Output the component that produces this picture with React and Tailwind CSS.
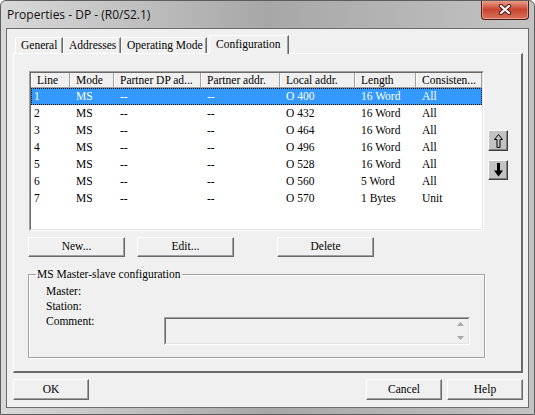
import React from 'react';

const rows = [
  ['1', 'MS', '--', '--', 'O 400', '16 Word', 'All'],
  ['2', 'MS', '--', '--', 'O 432', '16 Word', 'All'],
  ['3', 'MS', '--', '--', 'O 464', '16 Word', 'All'],
  ['4', 'MS', '--', '--', 'O 496', '16 Word', 'All'],
  ['5', 'MS', '--', '--', 'O 528', '16 Word', 'All'],
  ['6', 'MS', '--', '--', 'O 560', '5 Word', 'All'],
  ['7', 'MS', '--', '--', 'O 570', '1 Bytes', 'Unit'],
];

const columns = [
  { label: 'Line', width: 39 },
  { label: 'Mode', width: 44 },
  { label: 'Partner DP ad...', width: 87 },
  { label: 'Partner addr.', width: 79 },
  { label: 'Local addr.', width: 75 },
  { label: 'Length', width: 61 },
  { label: 'Consisten...', width: 66 },
];

// raised classic button
const Button = ({ children, className = '' }) => (
  <div
    className={`flex items-center justify-center border border-t-white border-l-white border-r-[#696969] border-b-[#696969] bg-[#f0f0f0] shadow-[inset_-1px_-1px_0_#a0a0a0] text-black ${className}`}
  >
    {children}
  </div>
);

const Tab = ({ label, width, active }) => (
  <div
    className={
      active
        ? 'relative z-10 -mb-px ml-[2px] h-[19px] whitespace-nowrap border-t border-l border-white border-r border-r-[#696969] bg-[#f0f0f0] pl-[6px] leading-[17px] shadow-[inset_-1px_0_0_#a0a0a0]'
        : 'h-[16px] whitespace-nowrap border-t border-l border-white border-r border-r-[#696969] bg-[#f0f0f0] pl-[5px] leading-[15px] shadow-[inset_-1px_0_0_#a0a0a0]'
    }
    style={{ width }}
  >
    {label}
  </div>
);

const UpArrow = () => (
  <svg width="11" height="16" viewBox="0 0 11 16">
    <polygon
      points="5.5,1.5 9.5,6.5 7,6.5 7,14.5 4,14.5 4,6.5 1.5,6.5"
      fill="none"
      stroke="#000"
      strokeWidth="1"
    />
  </svg>
);

const DownArrow = () => (
  <svg width="11" height="16" viewBox="0 0 11 16">
    <polygon points="4,1 7,1 7,8.5 10,8.5 5.5,14.5 1,8.5 4,8.5" fill="#000" />
  </svg>
);

const CloseGlyph = () => (
  <svg width="14" height="11" viewBox="0 0 14 11">
    <path d="M3 2 L11 9 M11 2 L3 9" stroke="#4a1a12" strokeWidth="4.2" strokeLinecap="round" />
    <path d="M3 2 L11 9 M11 2 L3 9" stroke="#fff" strokeWidth="2.2" strokeLinecap="round" />
  </svg>
);

export default function App() {
  return (
    <div className="relative h-[415px] w-[535px] overflow-hidden rounded-t-[6px] border border-[#5d5d5d] bg-gradient-to-r from-[#d9d9d9] via-[#a7a7a7] to-[#c3c3c3] font-['Liberation_Serif',serif] text-[11.5px] text-black">
      {/* title bar */}
      <div className="flex h-[27px] items-center pl-[6px] font-['Open_Sans',sans-serif] text-[12px] text-[#111]">
        Properties - DP - (R0/S2.1)
      </div>
      <div className="absolute top-[-1px] right-[5px] flex h-[20px] w-[48px] items-center justify-center rounded-b-[4px] border border-t-0 border-[#4b1f18] bg-gradient-to-b from-[#eba593] via-[#c9452f] to-[#d8715c] shadow-[inset_0_0_0_1px_rgba(255,200,190,0.5)]">
        <CloseGlyph />
      </div>

      {/* client area */}
      <div className="ml-[5px] h-[380px] w-[523px] border border-[#6b6b6b] bg-[#f0f0f0] pt-[6px]">
        {/* tabs */}
        <div className="flex h-[18px] items-end pl-[8px]">
          <Tab label="General" width={48} />
          <Tab label="Addresses" width={58} />
          <Tab label="Operating Mode" width={86} />
          <Tab label="Configuration" width={80} active />
        </div>

        {/* tab panel */}
        <div className="ml-[6px] h-[320px] w-[510px] border-t border-l border-white border-r-2 border-b-2 border-r-[#696969] border-b-[#696969] bg-[#f0f0f0] pt-[17px]">
          <div className="flex">
            {/* list view */}
            <div className="ml-[15px] h-[160px] w-[455px] border border-t-[#a0a0a0] border-l-[#a0a0a0] border-r-white border-b-white">
              <div className="h-full w-full border border-t-[#696969] border-l-[#696969] border-r-[#e3e3e3] border-b-[#e3e3e3] bg-white">
                <div className="flex h-[15px] border-b border-[#a0a0a0]">
                  {columns.map((c) => (
                    <div
                      key={c.label}
                      className="truncate border-l border-white border-r border-r-[#a0a0a0] bg-[#f0f0f0] pl-[5px] leading-[14px] whitespace-nowrap"
                      style={{ width: c.width }}
                    >
                      {c.label}
                    </div>
                  ))}
                </div>
                {rows.map((r, i) => (
                  <div
                    key={r[0]}
                    className={`flex h-[17px] leading-[16px] ${
                      i === 0 ? 'bg-[#3399ff] text-white outline-1 -outline-offset-1 outline-dotted outline-black' : ''
                    }`}
                  >
                    {r.map((cell, j) => (
                      <div
                        key={j}
                        className={`whitespace-nowrap ${j === 0 ? 'pl-[3px]' : 'pl-[6px]'}`}
                        style={{ width: columns[j].width }}
                      >
                        {cell}
                      </div>
                    ))}
                  </div>
                ))}
              </div>
            </div>

            {/* move buttons */}
            <div className="ml-[4px] flex flex-col pt-[59px]">
              <div className="flex h-[21px] w-[20px] items-center justify-center border border-t-white border-l-white border-r-[#404040] border-b-[#404040] bg-[#c3c3c3] shadow-[inset_-1px_-1px_0_#808080]">
                <UpArrow />
              </div>
              <div className="mt-[9px] flex h-[20px] w-[20px] items-center justify-center border border-t-white border-l-white border-r-[#404040] border-b-[#404040] bg-[#c3c3c3] shadow-[inset_-1px_-1px_0_#808080]">
                <DownArrow />
              </div>
            </div>
          </div>

          {/* action buttons */}
          <div className="mt-[6px] flex">
            <Button className="ml-[14px] h-[20px] w-[97px]">New...</Button>
            <Button className="ml-[12px] h-[20px] w-[97px]">Edit...</Button>
            <Button className="ml-[43px] h-[20px] w-[97px]">Delete</Button>
          </div>

          {/* group box */}
          <fieldset className="mt-[10px] ml-[14px] h-[91px] w-[457px] border border-[#a0a0a0] shadow-[1px_1px_0_#fff,inset_1px_1px_0_#fff]">
            <legend className="ml-[7px] px-[1px] leading-[15px]">MS Master-slave configuration</legend>
            <div className="pt-[2px] pl-[17px] leading-[15px]">
              <div>Master:</div>
              <div>Station:</div>
              <div className="flex items-start">
                <div className="w-[118px]">Comment:</div>
                <div className="mt-[3px] h-[28px] w-[306px] border border-t-[#a0a0a0] border-l-[#a0a0a0] border-r-white border-b-white">
                  <div className="flex h-full w-full justify-end border border-t-[#696969] border-l-[#696969] border-r-[#e3e3e3] border-b-[#e3e3e3] bg-[#f0f0f0]">
                    <div className="flex w-[15px] flex-col items-center justify-between py-[3px]">
                      <svg width="7" height="4" viewBox="0 0 7 4">
                        <polygon points="3.5,0 7,4 0,4" fill="#a8a8a8" />
                      </svg>
                      <svg width="7" height="4" viewBox="0 0 7 4">
                        <polygon points="0,0 7,0 3.5,4" fill="#a8a8a8" />
                      </svg>
                    </div>
                  </div>
                </div>
              </div>
            </div>
          </fieldset>
        </div>

        {/* dialog buttons */}
        <div className="mt-[6px] ml-[6px] flex w-[510px] justify-between">
          <Button className="h-[21px] w-[76px]">OK</Button>
          <div className="flex gap-[5px]">
            <Button className="h-[21px] w-[76px]">Cancel</Button>
            <Button className="h-[21px] w-[76px]">Help</Button>
          </div>
        </div>
      </div>
    </div>
  );
}
